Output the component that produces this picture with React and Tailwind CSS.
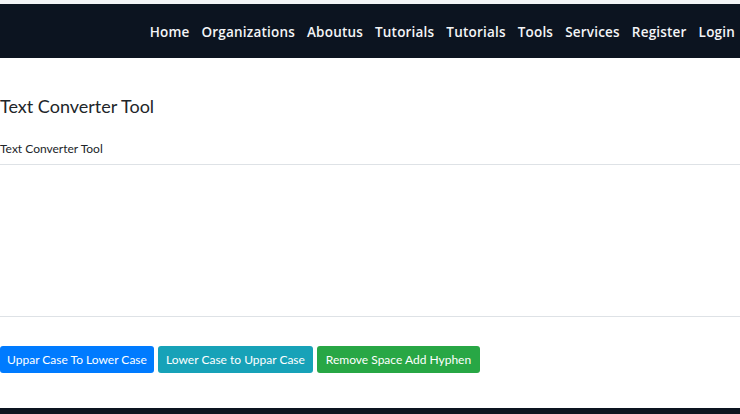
import React from 'react'

const links = ["Home", "Organizations", "Aboutus", "Tutorials", "Tutorials", "Tools", "Services", "Register", "Login"];

const App = () => {
    return (
        <div className="w-[740px] h-[414px] overflow-hidden bg-white" style={{ fontFamily: 'Lato, "Noto Sans", sans-serif' }}>
            {/* Navbar */}
            <div className="h-[4px] bg-[#f3f4f6]"></div>
            <nav className="h-[54px] bg-[#0c1420] flex items-center justify-end pr-[5px]">
                <ul className="flex gap-[12px] pt-[2px]" style={{ fontFamily: '"Open Sans", sans-serif' }}>
                    {links.map((l, i) => (
                        <li key={i} className="text-[#f4f5f7] text-[13.5px] font-semibold tracking-[0.2px]">{l}</li>
                    ))}
                </ul>
            </nav>

            {/* Converter */}
            <div className="pt-[34px]">
                <h1 className="text-[18px] text-[#212529] leading-[28px]">Text Converter Tool</h1>
                <label className="block mt-[20px] text-[12px] text-[#212529] leading-[18px]">Text Converter Tool</label>
                <textarea className="block mt-[6px] w-full h-[153px] border-y border-[#dee2e6] outline-none resize-none"></textarea>
                <div className="flex gap-[4px] mt-[29px]">
                    <button className="h-[27px] w-[154px] rounded-[3px] bg-[#007bff] text-white text-[12px]">Uppar Case To Lower Case</button>
                    <button className="h-[27px] w-[155px] rounded-[3px] bg-[#17a2b8] text-white text-[12px]">Lower Case to Uppar Case</button>
                    <button className="h-[27px] w-[163px] rounded-[3px] bg-[#28a745] text-white text-[12px]">Remove Space Add Hyphen</button>
                </div>
            </div>

            {/* Footer */}
            <div className="mt-[35px] h-[20px] bg-[#0c1420]"></div>
        </div>
    );
};

export default App;
